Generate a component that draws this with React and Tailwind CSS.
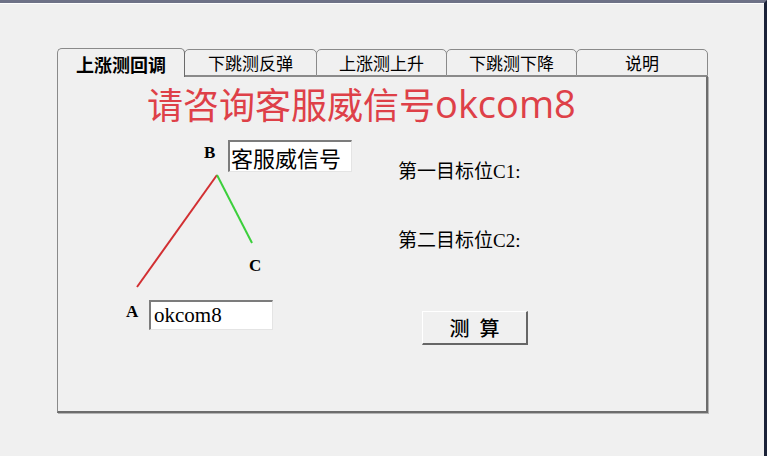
import React from "react";

const tabs = [
  { label: "上涨测回调", w: "w-[128px]", active: true },
  { label: "下跳测反弹", w: "w-[133px]" },
  { label: "上涨测上升", w: "w-[131px]" },
  { label: "下跳测下降", w: "w-[131px]" },
  { label: "说明", w: "w-[132px]" },
];

const Tab = ({ label, w, active }) =>
  active ? (
    <div
      className={`${w} relative z-10 -mb-px flex h-[29px] items-center justify-center rounded-t-[5px] border border-b-0 border-[#8a8a8a] border-r-[#6a6a6a] bg-[#f0f0f0] pt-[2px] text-[18px] font-bold text-black`}
    >
      {label}
    </div>
  ) : (
    <div
      className={`${w} -ml-px flex h-[27px] items-center justify-center rounded-t-[5px] border border-[#8a8a8a] bg-[#f0f0f0] pt-[1px] text-[17px] text-black`}
    >
      {label}
    </div>
  );

export default function App() {
  return (
    <div className="h-[456px] w-[767px] overflow-hidden border-t-[3px] border-r-[3px] border-t-[#6e7287] border-r-[#1b2238] bg-[#f0f0f0] font-['Noto_Sans_CJK_SC',sans-serif]">
      <div className="h-px bg-white" />

      <div className="ml-[57px] mt-[44px] w-[651px]">
        {/* tabs */}
        <div className="flex items-end">
          {tabs.map((t) => (
            <Tab key={t.label} {...t} />
          ))}
        </div>

        {/* panel */}
        <div className="h-[337px] border border-r-2 border-b-2 border-[#8a8a8a] border-r-[#6c6c6c] border-b-[#6c6c6c] shadow-[1px_1px_0_#b4b4b4]">
          <div className="flex h-[50px] items-center whitespace-nowrap pl-[89px] pt-[2px] text-[36px] leading-[40px] text-[#de4048]">
            <span>请咨询客服威信号</span>
            <span className="font-['Open_Sans',sans-serif] text-[38px]">okcom8</span>
          </div>

          <div className="flex">
            {/* diagram */}
            <div className="relative h-[220px] w-[340px] shrink-0">
              <svg className="absolute inset-0" width="340" height="220">
                <line x1="79" y1="160" x2="159" y2="48" stroke="#d22f32" strokeWidth="2" />
                <line x1="159" y1="48" x2="194" y2="116" stroke="#3ccf3c" strokeWidth="2" />
              </svg>

              <span className="absolute left-[146px] top-[17px] font-['Liberation_Serif',serif] text-[17px] font-bold leading-[17px]">
                B
              </span>
              <div className="absolute left-[170px] top-[13px] flex h-[32px] w-[124px] items-center border-t-2 border-l-2 border-b border-r border-t-[#7c7c7c] border-l-[#7c7c7c] border-b-[#e4e4e4] border-r-[#e4e4e4] bg-white pl-[1px] text-[22px] leading-none">
                客服威信号
              </div>

              <span className="absolute left-[191px] top-[130px] font-['Liberation_Serif',serif] text-[17px] font-bold leading-[17px]">
                C
              </span>

              <span className="absolute left-[68px] top-[176px] font-['Liberation_Serif',serif] text-[17px] font-bold leading-[17px]">
                A
              </span>
              <div className="absolute left-[91px] top-[173px] flex h-[30px] w-[124px] items-center border-t-2 border-l-2 border-b border-r border-t-[#7c7c7c] border-l-[#7c7c7c] border-b-[#e4e4e4] border-r-[#e4e4e4] bg-white pl-[3px] font-['Liberation_Serif',serif] text-[21px] leading-none">
                okcom8
              </div>
            </div>

            {/* results */}
            <div className="flex flex-col pt-[33px] font-['Liberation_Serif','Noto_Sans_CJK_SC',serif] text-[19px] leading-[24px] text-black">
              <div>第一目标位C1:</div>
              <div className="mt-[45px]">第二目标位C2:</div>
              <button className="ml-[24px] mt-[58px] flex h-[34px] w-[106px] items-center justify-center gap-[10px] border-t border-l border-b-2 border-r-2 border-t-white border-l-white border-b-[#666666] border-r-[#666666] bg-[#f0f0f0] font-['Noto_Sans_CJK_SC',sans-serif] text-[20px] font-medium leading-none">
                <span>测</span>
                <span>算</span>
              </button>
            </div>
          </div>
        </div>
      </div>
    </div>
  );
}
